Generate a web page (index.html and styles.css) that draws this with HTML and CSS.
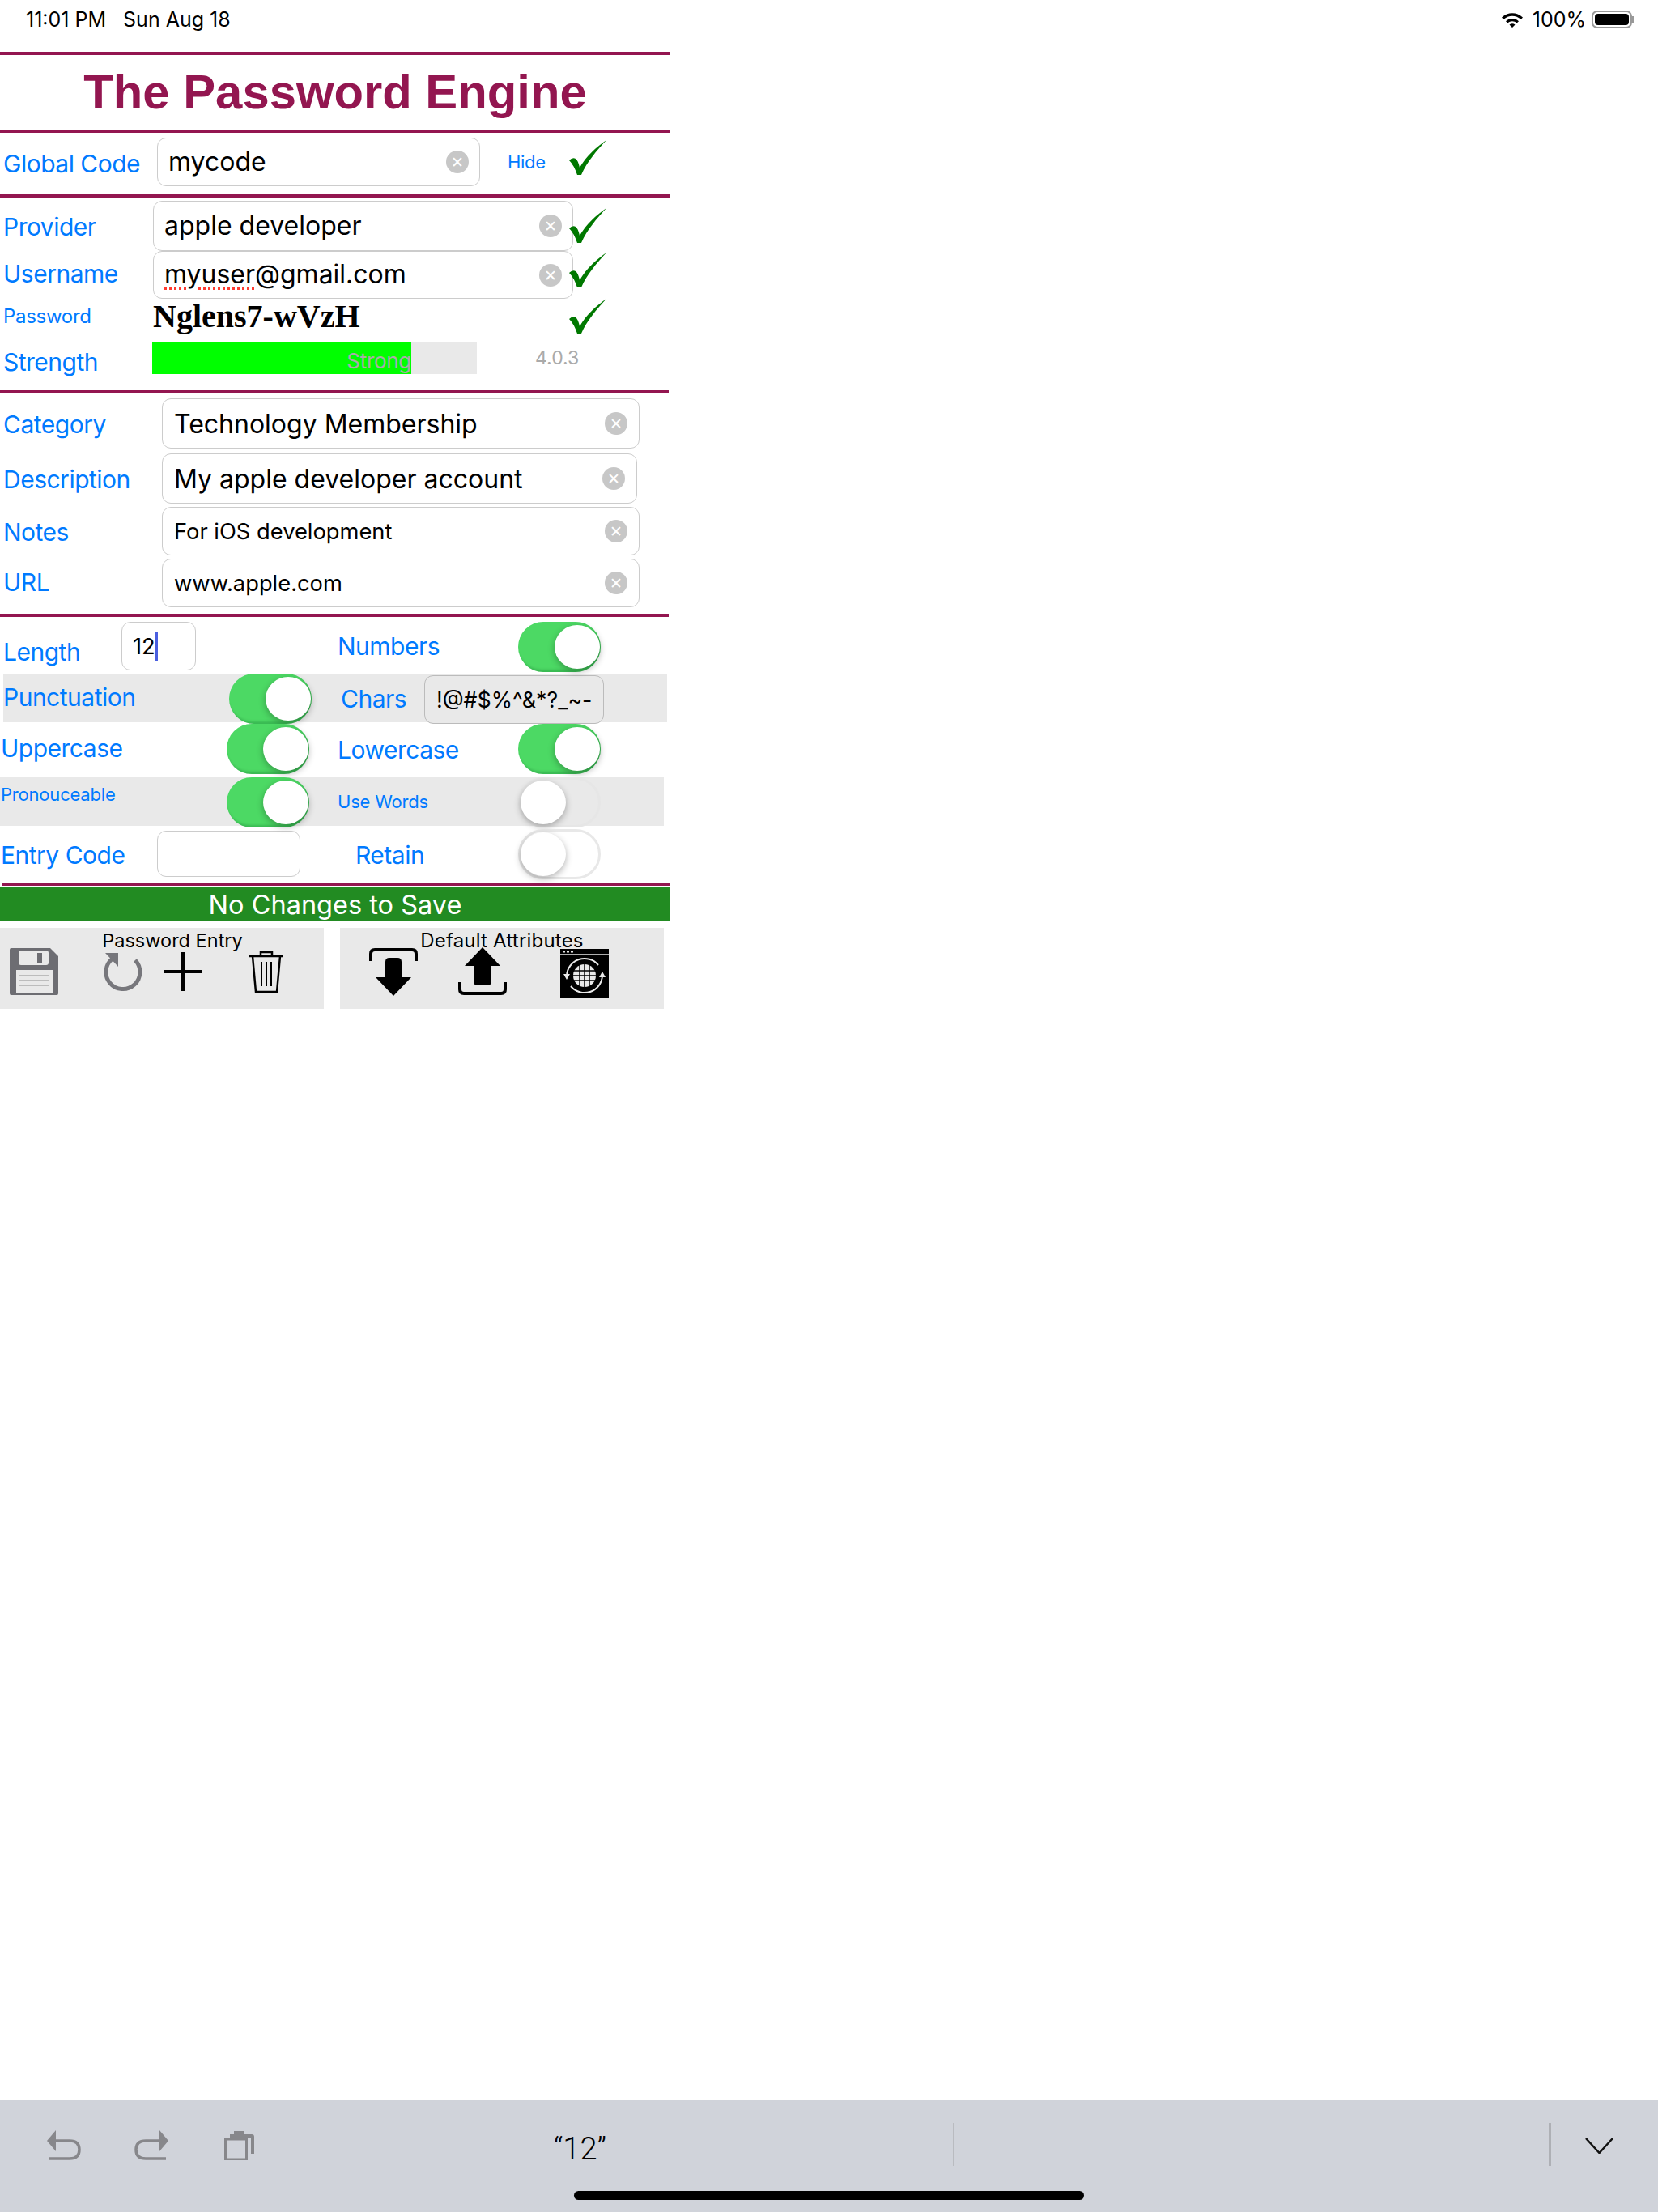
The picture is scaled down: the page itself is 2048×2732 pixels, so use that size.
FILE: index.html
```html
<!DOCTYPE html>
<html lang="en">
<head>
  <meta charset="UTF-8" />
  <title>The Password Engine</title>
  <link rel="stylesheet" href="styles.css">
</head>
<body>

<div class="status-bar">
  <span class="status-time">11:01 PM</span>
  <span class="status-date">Sun Aug 18</span>
  <span class="status-right">
    <svg class="wifi" viewBox="0 0 28 20"><path d="M1 7.500C8.500.5 19.500.5 27 7.500l-2.200 2.400C18.500 4.200 9.500 4.200 3.200 9.900zM6 12.200c4.800-4.300 11.200-4.300 16 0l-2.300 2.400c-3.500-3-7.900-3-11.400 0zM10.500 16.400c2.200-1.700 4.800-1.700 7 0L14 20z" fill="#000"/></svg>
    <span class="battery-text">100%</span>
    <span class="battery"><span class="battery-fill"></span></span>
    <span class="battery-nub"></span>
  </span>
</div>

<div class="app">
  <div class="rule"></div>
  <h1 class="title">The Password Engine</h1>
  <div class="rule"></div>

  <div class="row row-global">
    <span class="label label-global">Global Code</span>
    <div class="field field-global"><span class="field-text">mycode</span><span class="clear">&#10005;</span></div>
    <span class="hide-link">Hide</span>
    <svg class="check check-global" viewBox="0 0 46 43"><path d="M0 25Q4 21 8 23 11 25 13 34C21 20 33 9 46 0 34 13 22 27 15 43H10Q6 31 0 25Z" fill="#007800"/></svg>
  </div>
  <div class="rule"></div>

  <div class="section-credentials">
    <div class="row row-provider">
      <span class="label label-cred">Provider</span>
      <div class="field field-cred"><span class="field-text">apple developer</span><span class="clear">&#10005;</span></div>
      <svg class="check check-cred" viewBox="0 0 46 43"><path d="M0 25Q4 21 8 23 11 25 13 34C21 20 33 9 46 0 34 13 22 27 15 43H10Q6 31 0 25Z" fill="#007800"/></svg>
    </div>
    <div class="row row-username">
      <span class="label label-cred">Username</span>
      <div class="field field-cred field-username"><span class="field-text"><span class="misspelt">myuser</span>@gmail.com</span><span class="clear">&#10005;</span></div>
      <svg class="check check-cred check-username" viewBox="0 0 46 43"><path d="M0 25Q4 21 8 23 11 25 13 34C21 20 33 9 46 0 34 13 22 27 15 43H10Q6 31 0 25Z" fill="#007800"/></svg>
    </div>
    <div class="row row-password">
      <span class="label label-small label-cred">Password</span>
      <span class="password-value">Nglens7-wVzH</span>
      <svg class="check check-password" viewBox="0 0 46 43"><path d="M0 25Q4 21 8 23 11 25 13 34C21 20 33 9 46 0 34 13 22 27 15 43H10Q6 31 0 25Z" fill="#007800"/></svg>
    </div>
    <div class="row row-strength">
      <span class="label label-cred label-strength">Strength</span>
      <div class="meter"><div class="meter-fill" style="width: 320px"><span class="meter-text">Strong</span></div></div>
      <span class="version">4.0.3</span>
    </div>
  </div>
  <div class="rule rule-short"></div>

  <div class="section-details">
    <div class="row row-detail row-category">
      <span class="label label-detail">Category</span>
      <div class="field field-detail"><span class="field-text">Technology Membership</span><span class="clear">&#10005;</span></div>
    </div>
    <div class="row row-detail row-description">
      <span class="label label-detail">Description</span>
      <div class="field field-detail field-narrow"><span class="field-text">My apple developer account</span><span class="clear">&#10005;</span></div>
    </div>
    <div class="row row-detail row-notes">
      <span class="label label-detail">Notes</span>
      <div class="field field-detail"><span class="field-text field-text-small">For iOS development</span><span class="clear">&#10005;</span></div>
    </div>
    <div class="row row-detail row-url">
      <span class="label label-detail">URL</span>
      <div class="field field-detail"><span class="field-text field-text-small">www.apple.com</span><span class="clear">&#10005;</span></div>
    </div>
  </div>
  <div class="rule rule-short"></div>

  <div class="section-options">
    <div class="opt-row opt-length">
      <div class="opt-left">
        <span class="label label-length">Length</span>
        <div class="field field-length"><span class="field-text field-text-small">12</span><span class="caret"></span></div>
      </div>
      <div class="opt-right">
        <span class="label label-numbers">Numbers</span>
        <div class="switch on"><span class="knob"></span></div>
      </div>
    </div>
    <div class="opt-row opt-punct band">
      <div class="opt-left">
        <span class="label label-punct">Punctuation</span>
        <div class="switch on switch-punct"><span class="knob"></span></div>
      </div>
      <div class="opt-right opt-right-chars">
        <span class="label label-chars">Chars</span>
        <div class="field field-chars"><span class="field-text field-text-chars">!@#$%^&amp;*?_~-</span></div>
      </div>
    </div>
    <div class="opt-row opt-case">
      <div class="opt-left opt-left-flush">
        <span class="label label-upper">Uppercase</span>
        <div class="switch on"><span class="knob"></span></div>
      </div>
      <div class="opt-right">
        <span class="label label-lower">Lowercase</span>
        <div class="switch on"><span class="knob"></span></div>
      </div>
    </div>
    <div class="opt-row opt-words band band-wide">
      <div class="opt-left opt-left-flush">
        <span class="label label-tiny label-pron">Pronouceable</span>
        <div class="switch on"><span class="knob"></span></div>
      </div>
      <div class="opt-right">
        <span class="label label-tiny label-words">Use Words</span>
        <div class="switch off on-band"><span class="knob"></span></div>
      </div>
    </div>
    <div class="opt-row opt-entry">
      <div class="opt-left opt-left-flush">
        <span class="label label-entry">Entry Code</span>
        <div class="field field-entry"></div>
      </div>
      <div class="opt-right">
        <span class="label label-retain">Retain</span>
        <div class="switch off"><span class="knob"></span></div>
      </div>
    </div>
  </div>
  <div class="rule rule-last"></div>

  <div class="save-bar">No Changes to Save</div>

  <div class="toolbars">
    <div class="toolbar toolbar-entry">
      <div class="toolbar-title">Password Entry</div>
      <div class="toolbar-icons">
        <svg class="icon-save" viewBox="0 0 60 58">
          <path d="M0 2Q0 0 2 0H50L60 10V56Q60 58 58 58H2Q0 58 0 56Z" fill="#6d6d72"/>
          <rect x="11" y="3" width="37" height="18" rx="3" fill="#e9e9e9"/>
          <rect x="34" y="6" width="6" height="12" fill="#6d6d72"/>
          <rect x="8" y="27" width="45" height="29" fill="#e9e9e9"/>
          <path d="M12 34H49M12 40H49M12 46H49" stroke="#bcbcbc" stroke-width="2"/>
        </svg>
        <svg class="icon-reload" viewBox="0 0 48 50">
          <path d="M39 10A21 21 0 1 1 11 8" fill="none" stroke="#77777c" stroke-width="5"/>
          <path d="M2 1H18V18Z" fill="#77777c"/>
        </svg>
        <svg class="icon-plus" viewBox="0 0 48 48"><path d="M24 0V48M0 24H48" stroke="#000" stroke-width="4"/></svg>
        <svg class="icon-trash" viewBox="0 0 42 52">
          <path d="M0 7H42M14 7V2H28V7" fill="none" stroke="#000" stroke-width="2.500"/>
          <path d="M4 7L8 51H34L38 7" fill="none" stroke="#000" stroke-width="2.500"/>
          <path d="M15 14V44M21 14V44M27 14V44" stroke="#000" stroke-width="2"/>
        </svg>
      </div>
    </div>
    <div class="toolbar toolbar-defaults">
      <div class="toolbar-title">Default Attributes</div>
      <div class="toolbar-icons">
        <svg class="icon-down" viewBox="0 0 60 60">
          <path d="M2 17V8Q2 3 7 3H53Q58 3 58 8V17" fill="none" stroke="#000" stroke-width="4"/>
          <path d="M20 18Q20 13 25 13H35Q40 13 40 18V37H52L30 60 8 37H20Z" fill="#000"/>
        </svg>
        <svg class="icon-up" viewBox="0 0 60 60">
          <path d="M2 43V52Q2 57 7 57H53Q58 57 58 52V43" fill="none" stroke="#000" stroke-width="4"/>
          <path d="M30 0L52 23H41V42Q41 47 36 47H24Q19 47 19 42V23H8Z" fill="#000"/>
        </svg>
        <svg class="icon-web" viewBox="0 0 60 60">
          <rect width="60" height="60" fill="#000"/>
          <path d="M0 7H60" stroke="#e9e9e9" stroke-width="1.500"/>
          <path d="M3 3.500H6M8 3.500H11M13 3.500H16" stroke="#e9e9e9" stroke-width="2"/>
          <circle cx="30" cy="33" r="14" fill="#e9e9e9"/>
          <path d="M24 19V47M30 19V47M36 19V47M16 27H44M16 33H44M16 39H44" stroke="#000" stroke-width="1.500"/>
          <path d="M8 33A22 22 0 0 1 47 20M52 33A22 22 0 0 1 13 46" fill="none" stroke="#e9e9e9" stroke-width="2"/>
          <path d="M4 31H12L8 38ZM48 35H56L52 28Z" fill="#e9e9e9"/>
        </svg>
      </div>
    </div>
  </div>
</div>

<div class="keyboard-bar">
  <div class="kb-row">
    <svg class="kb-icon kb-undo" viewBox="0 0 42 37"><path d="M3 13H28Q40 13 40 24T28 35H3" fill="none" stroke="#87878b" stroke-width="3.500"/><path d="M0 13L11 0V26Z" fill="#87878b"/></svg>
    <svg class="kb-icon kb-redo" viewBox="0 0 42 37"><path d="M39 13H14Q2 13 2 24T14 35H39" fill="none" stroke="#87878b" stroke-width="3.500"/><path d="M42 13L31 0V26Z" fill="#87878b"/></svg>
    <svg class="kb-icon kb-paste" viewBox="0 0 37 38"><path d="M7 6H12V2H24V6H34Q37 6 37 9V30H33V10H7Z" fill="#87878b"/><rect x="1.500" y="12" width="26" height="25" fill="none" stroke="#87878b" stroke-width="3"/></svg>
    <span class="kb-suggestion">“12”</span>
    <span class="kb-sep"></span>
    <span class="kb-sep kb-sep-mid"></span>
    <span class="kb-sep kb-sep-last"></span>
    <svg class="kb-chevron" viewBox="0 0 35 20"><path d="M1 1L17.500 19 34 1" fill="none" stroke="#111" stroke-width="2.500"/></svg>
  </div>
  <div class="home-bar"></div>
</div>

</body>
</html>
```

FILE: styles.css
```css
* {
  margin: 0; padding: 0; box-sizing: border-box;
}

body {
  font-family: Inter, 'Noto Sans', sans-serif;
  background: white;
  color: black;
  width: 2048px;
  height: 2732px;
  display: flex;
  flex-direction: column;
  overflow: hidden;
}

/* status bar */
.status-bar {
  height: 64px;
  display: flex;
  align-items: flex-start;
  padding: 9px 30px 0 32px;
  font-size: 25px;
  line-height: 30px;
}

.status-date { margin-left: 21px; }

.status-right {
  margin-left: auto;
  display: flex;
  align-items: center;
}

.wifi { width: 28px; height: 20px; }

.battery-text { margin-left: 11px; }

.battery {
  width: 50px;
  height: 22px;
  margin-left: 7px;
  border: 2px solid #999;
  border-radius: 7px;
  padding: 2px;
}

.battery-fill {
  display: block;
  height: 100%;
  background: black;
  border-radius: 4px;
}

.battery-nub {
  width: 2px;
  height: 8px;
  background: #999;
}

/* app */
.app {
  width: 828px;
  flex: 1;
}

.rule {
  height: 4px;
  background: #931650;
}

.rule-short { width: 826px; }

.rule-last { margin-left: 2px; }

.title {
  height: 92px;
  line-height: 92px;
  text-align: center;
  font-family: 'Liberation Sans', Arial, sans-serif;
  font-size: 59.8px;
  font-weight: bold;
  color: #931650;
}

.row {
  display: flex;
  align-items: flex-start;
}

.label {
  color: #007aff;
  font-size: 30px;
  letter-spacing: -0.5px;
  line-height: 40px;
  white-space: nowrap;
  flex-shrink: 0;
}

.label-small { font-size: 24px; letter-spacing: -0.3px; }
.label-tiny { font-size: 22px; letter-spacing: -0.2px; }

.field {
  border: 1.5px solid #ccc;
  border-radius: 11px;
  background: white;
  display: flex;
  align-items: center;
  flex-shrink: 0;
}

.field-text {
  font-size: 32px;
  white-space: nowrap;
}

.field-text-small { font-size: 27.3px; }
.field-text-chars { font-size: 26.8px; }

.clear {
  margin-left: auto;
  width: 28px;
  height: 28px;
  border-radius: 50%;
  background: #c7c7c7;
  color: white;
  font-size: 19px;
  font-weight: bold;
  line-height: 28px;
  text-align: center;
  font-family: 'DejaVu Sans', sans-serif;
  flex-shrink: 0;
}

.check { width: 46px; height: 43px; flex-shrink: 0; }

/* global code row */
.row-global {
  height: 76px;
  padding-left: 4px;
}

.label-global { width: 190px; margin-top: 18px; }

.field-global {
  width: 399px;
  height: 60px;
  margin-top: 6px;
  padding: 0 13px;
}

.field-global .field-text { margin-top: -2px; }

.hide-link {
  color: #007aff;
  font-size: 22px;
  letter-spacing: -0.3px;
  line-height: 30px;
  margin: 21px 0 0 34px;
}

.check-global { margin: 9px 0 0 29px; }

/* provider, username, password, strength */
.section-credentials {
  height: 238px;
  padding: 4px 0 0 4px;
}

.label-cred { width: 185px; }

.field-cred {
  width: 519px;
  height: 62px;
  padding: 0 13px;
}

.field-cred .field-text { margin-top: -2px; }

.row-provider { height: 62px; }
.row-provider .label { margin-top: 12px; }

.row-username { height: 59px; }
.row-username .label { margin-top: 8px; }
.field-username { height: 59px; }

.check-cred { margin: 9px 0 0 -5px; }
.check-username { margin-top: 2px; }

.misspelt {
  text-decoration: underline dotted #ff3b30 3px;
  text-underline-offset: 5px;
}

.row-password { height: 53px; }
.row-password .label { margin-top: 2px; }

.password-value {
  width: 514px;
  font-family: 'Liberation Serif', 'Times New Roman', serif;
  font-size: 40px;
  font-weight: bold;
  line-height: 44px;
}

.row-strength .label-strength { margin-top: 5px; }

.meter {
  width: 401px;
  height: 40px;
  background: #e9e9e9;
  margin-left: -1px;
  flex-shrink: 0;
}

.meter-fill {
  height: 100%;
  background: #00ff00;
  text-align: right;
}

.meter-text {
  color: #aaa;
  font-size: 26px;
  letter-spacing: -0.3px;
  line-height: 48px;
  white-space: nowrap;
}

.version {
  color: #aaa;
  font-size: 23px;
  line-height: 40px;
  margin-left: 72px;
}

/* category, description, notes, url */
.section-details {
  height: 272px;
  padding: 6px 0 0 4px;
}

.label-detail { width: 196px; }

.field-detail {
  width: 590px;
  height: 100%;
  padding: 0 14px 0 14px;
}

.field-narrow { width: 587px; }

.row-category { height: 68px; }
.row-category .field-detail { height: 62px; }
.row-category .label { margin-top: 12px; }

.row-description { height: 66px; }
.row-description .field-detail { height: 62px; }
.row-description .label { margin-top: 12px; }

.row-notes { height: 64px; }
.row-notes .field-detail { height: 60px; }
.row-notes .label { margin-top: 11px; }

.row-url { height: 60px; }
.row-url .label { margin-top: 9px; }

/* options grid */
.section-options {
  height: 328px;
  padding-top: 6px;
}

.opt-row {
  display: flex;
  align-items: flex-start;
  height: 62px;
}

.opt-left {
  width: 417px;
  flex-shrink: 0;
  display: flex;
  align-items: flex-start;
  padding-left: 4px;
}

.opt-left-flush { padding-left: 1px; }

.opt-right {
  flex: 1;
  display: flex;
  align-items: flex-start;
}

.band {
  background: #e9e9e9;
  height: 60px;
  width: 820px;
  margin-left: 4px;
}

.band-wide { margin-left: 0; }

.opt-punct .opt-left { width: 413px; padding-left: 0; }

.switch {
  width: 102px;
  height: 62px;
  border-radius: 31px;
  display: flex;
  align-items: center;
  padding: 0 1px;
  flex-shrink: 0;
  position: relative;
  z-index: 1;
}

.switch.on {
  background: #4cd964;
  box-shadow: inset -2px -3px 3px rgba(0, 90, 30, 0.25);
  justify-content: flex-end;
}

.switch.off {
  border: 3px solid #e8e8e8;
  background: white;
  padding: 0;
}

.switch.off.on-band {
  background: #e9e9e9;
  border-color: #e6e6e6;
}

.knob {
  width: 56px;
  height: 54px;
  border-radius: 50%;
  background: white;
  box-shadow: 0 3px 8px rgba(0, 0, 0, 0.3);
}

.opt-length { margin-bottom: 2px; height: 62px; }
.opt-case { margin-top: 2px; }
.opt-words { margin-top: 4px; }
.opt-entry { margin-top: 4px; }

.label-length { width: 146px; margin-top: 17px; }

.field-length {
  width: 92px;
  height: 60px;
  padding-left: 13px;
  margin-top: 0;
}

.caret {
  width: 3px;
  height: 37px;
  background: #4a5fe0;
}

.label-numbers { width: 223px; margin-top: 10px; }
.label-punct { width: 279px; margin-top: 9px; }
.opt-right-chars { padding-left: 4px; }
.label-chars { width: 103px; margin-top: 11px; }
.label-upper { width: 279px; margin-top: 10px; }
.label-lower { width: 223px; margin-top: 12px; }
.label-pron { width: 279px; margin-top: 1px; }
.label-words { width: 223px; margin-top: 10px; }
.label-entry { width: 193px; margin-top: 12px; }
.label-retain { width: 201px; margin: 12px 0 0 22px; }

.field-chars {
  width: 222px;
  height: 60px;
  padding-left: 14px;
  margin-top: 2px;
  background: #e9e9e9;
  border-color: #bbb;
}

.field-entry {
  width: 177px;
  height: 57px;
  margin-top: 2px;
}

/* save bar */
.save-bar {
  height: 42px;
  margin-top: 2px;
  background: #228b22;
  color: white;
  font-size: 32.5px;
  line-height: 43px;
  text-align: center;
}

/* toolbars */
.toolbars {
  display: flex;
  gap: 20px;
  margin-top: 8px;
}

.toolbar {
  width: 400px;
  height: 100px;
  background: #e9e9e9;
}

.toolbar-title {
  font-size: 23.5px;
  line-height: 32px;
  text-align: center;
  height: 24px;
}

.toolbar-entry .toolbar-title { padding-left: 26px; }
.toolbar-defaults .toolbar-title { font-size: 24px; letter-spacing: 0.2px; padding-left: 0; }

.toolbar-icons {
  display: flex;
  align-items: flex-start;
}

.icon-save { width: 60px; height: 58px; margin: 1px 0 0 12px; }
.icon-reload { width: 48px; height: 50px; margin: 6px 0 0 56px; }
.icon-plus { width: 48px; height: 48px; margin: 6px 0 0 26px; }
.icon-trash { width: 42px; height: 52px; margin: 4px 0 0 58px; }
.icon-down { width: 60px; height: 60px; margin-left: 36px; }
.icon-up { width: 60px; height: 60px; margin-left: 50px; }
.icon-web { width: 60px; height: 60px; margin: 2px 0 0 66px; }

/* keyboard bar */
.keyboard-bar {
  height: 138px;
  background: #d0d3da;
  flex-shrink: 0;
}

.kb-row {
  height: 112px;
  display: flex;
  align-items: flex-start;
}

.kb-icon { flex-shrink: 0; }

.kb-undo { width: 42px; height: 37px; margin: 37px 0 0 58px; }
.kb-redo { width: 42px; height: 37px; margin: 37px 0 0 66px; }
.kb-paste { width: 37px; height: 38px; margin: 36px 0 0 69px; }

.kb-suggestion {
  width: 185px;
  margin: 37px 0 0 370px;
  font-family: Roboto, sans-serif;
  font-weight: 300;
  font-size: 38px;
  line-height: 46px;
}

.kb-sep {
  width: 1px;
  height: 53px;
  margin-top: 28px;
  background: #b9bbc0;
}

.kb-sep-mid { margin-left: 307px; }

.kb-sep-last {
  width: 3px;
  margin-left: 735px;
  background: #aeb0b5;
}

.kb-chevron {
  width: 35px;
  height: 20px;
  margin: 46px 0 0 42px;
}

.home-bar {
  width: 630px;
  height: 11px;
  margin-left: 709px;
  background: black;
  border-radius: 6px;
}
```
